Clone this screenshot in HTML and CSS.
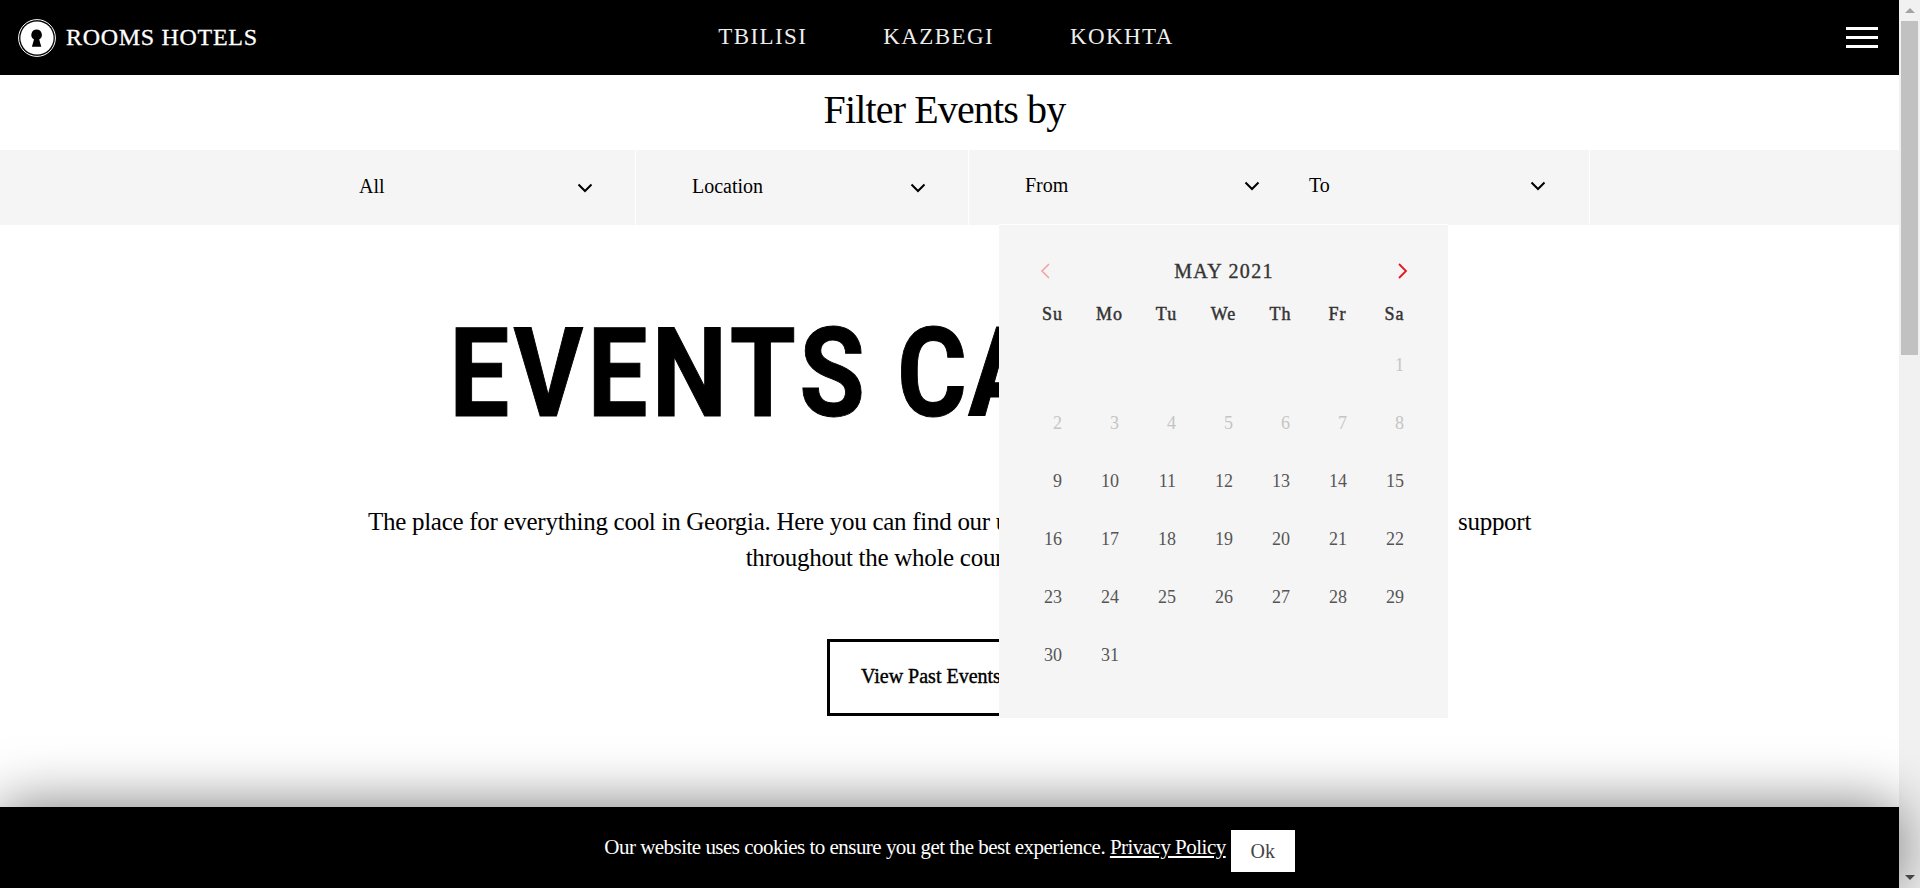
FILE: index.html
```html
<!DOCTYPE html>
<html lang="en">
<head>
    <meta charset="UTF-8">
    <meta name="viewport" content="width=device-width, initial-scale=1.0">
    <title>Events Calendar - Rooms Hotels</title>
    <link rel="stylesheet" href="styles.css">
</head>
<body>
    <div class="page">
        <header class="site-header">
            <a class="logo" href="#">
                <svg class="logo-mark" viewBox="0 0 38 38" width="38" height="38">
                    <circle cx="19" cy="19" r="18.4" fill="none" stroke="#fff" stroke-width="1"/>
                    <circle cx="19" cy="19" r="16.6" fill="#fff"/>
                    <path d="M18.6 10.5a5.3 5.3 0 0 1 2.6 9.9l2.1 7.4h-9.4l2.1-7.4a5.3 5.3 0 0 1 2.6-9.9z" fill="#000"/>
                </svg>
                <span class="logo-text">ROOMS HOTELS</span>
            </a>
            <nav class="main-nav">
                <a href="#">TBILISI</a>
                <a href="#">KAZBEGI</a>
                <a href="#">KOKHTA</a>
            </nav>
            <button class="menu-btn" aria-label="Menu"><span></span><span></span><span></span></button>
        </header>

        <h2 class="filter-title">Filter Events by</h2>

        <div class="filter-bar">
            <div class="filter-cell cell-all">
                <span>All</span>
                <svg class="chevron" viewBox="0 0 16 10" width="16" height="10"><path d="M1.5 1.5 8 8l6.5-6.5" fill="none" stroke="#000" stroke-width="2"/></svg>
            </div>
            <div class="filter-cell cell-location">
                <span>Location</span>
                <svg class="chevron" viewBox="0 0 16 10" width="16" height="10"><path d="M1.5 1.5 8 8l6.5-6.5" fill="none" stroke="#000" stroke-width="2"/></svg>
            </div>
            <div class="filter-cell cell-from">
                <span>From</span>
                <svg class="chevron" viewBox="0 0 16 10" width="16" height="10"><path d="M1.5 1.5 8 8l6.5-6.5" fill="none" stroke="#000" stroke-width="2"/></svg>

                <div class="calendar">
                    <div class="cal-head">
                        <svg class="cal-arrow" viewBox="0 0 10 16" width="10" height="16"><path d="M9 1 2 8l7 7" fill="none" stroke="#f7a3a3" stroke-width="1.6"/></svg>
                        <span class="cal-month">MAY 2021</span>
                        <svg class="cal-arrow" viewBox="0 0 10 16" width="10" height="16"><path d="m1 1 7 7-7 7" fill="none" stroke="#e9141c" stroke-width="1.8"/></svg>
                    </div>
                    <div class="cal-weekdays">
                        <span>Su</span><span>Mo</span><span>Tu</span><span>We</span><span>Th</span><span>Fr</span><span>Sa</span>
                    </div>
                    <div class="cal-days">
                        <span></span><span></span><span></span><span></span><span></span><span></span><span class="off">1</span>
                        <span class="off">2</span><span class="off">3</span><span class="off">4</span><span class="off">5</span><span class="off">6</span><span class="off">7</span><span class="off">8</span>
                        <span>9</span><span>10</span><span>11</span><span>12</span><span>13</span><span>14</span><span>15</span>
                        <span>16</span><span>17</span><span>18</span><span>19</span><span>20</span><span>21</span><span>22</span>
                        <span>23</span><span>24</span><span>25</span><span>26</span><span>27</span><span>28</span><span>29</span>
                        <span>30</span><span>31</span>
                    </div>
                </div>
            </div>
            <div class="filter-cell cell-to">
                <span>To</span>
                <svg class="chevron" viewBox="0 0 16 10" width="16" height="10"><path d="M1.5 1.5 8 8l6.5-6.5" fill="none" stroke="#000" stroke-width="2"/></svg>
            </div>
            <div class="filter-cell cell-empty"></div>
        </div>

        <main class="hero">
            <h1 class="hero-title"><span class="word-first">EVENTS</span> CALENDAR</h1>
            <p class="hero-text">The place for everything cool in Georgia. Here you can find our upcoming events, festivals and artists we truly&ensp;support<br>throughout the whole country and beyond</p>
            <a class="past-btn" href="#">View Past Events</a>
        </main>

        <div class="cookie-bar">
            <span>Our website uses cookies to ensure you get the best experience. <a href="#">Privacy Policy</a></span>
            <button class="cookie-ok">Ok</button>
        </div>
    </div>

    <aside class="scrollbar">
        <span class="scroll-up"></span>
        <span class="scroll-thumb"></span>
        <span class="scroll-down"></span>
    </aside>
</body>
</html>
```
FILE: styles.css
```css
* {
    box-sizing: border-box;
    margin: 0;
    padding: 0;
}
html, body {
    height: 100%;
    overflow: hidden;
}
body {
    display: flex;
    font-family: "Liberation Serif", serif;
    color: #000;
    background: #fff;
}
a {
    color: inherit;
    text-decoration: none;
}
.page {
    width: 1899px;
    height: 888px;
    display: flex;
    flex-direction: column;
}

/* header */
.site-header {
    height: 75px;
    flex: none;
    background: #000;
    display: grid;
    grid-template-columns: 1fr auto 1fr;
    align-items: center;
    padding: 0 21px 0 18px;
}
.logo {
    display: flex;
    align-items: center;
    gap: 10px;
    color: #fff;
}
.logo-text {
    font-size: 24px;
    letter-spacing: 0.7px;
    font-weight: 400;
    -webkit-text-stroke: 0.3px #fff;
}
.main-nav {
    display: flex;
    gap: 76px;
    margin-right: 4px;
    margin-bottom: 2px;
}
.main-nav a {
    color: #eee;
    font-size: 23px;
    letter-spacing: 1.4px;
}
.menu-btn {
    width: 32px;
    justify-self: end;
    background: none;
    border: none;
    display: flex;
    flex-direction: column;
    gap: 6px;
}
.menu-btn span {
    display: block;
    height: 3px;
    background: #fff;
}

/* filters */
.filter-title {
    height: 75px;
    flex: none;
    text-align: center;
    font-size: 40px;
    font-weight: 400;
    line-height: 70px;
    letter-spacing: -0.86px;
    padding-right: 10px;
}
.filter-bar {
    height: 75px;
    flex: none;
    display: flex;
    background: #f5f5f5;
    font-size: 20px;
}
.filter-cell {
    display: flex;
    align-items: center;
    justify-content: space-between;
    position: relative;
}
.filter-cell .chevron {
    flex: none;
}
.cell-all {
    width: 636px;
    padding: 0 42px 0 359px;
    border-right: 1px solid #fff;
}
.cell-all > span,
.cell-location > span {
    margin-bottom: 2px;
}
.cell-location {
    width: 333px;
    padding: 0 42px 0 56px;
    border-right: 1px solid #fff;
}
.cell-from {
    width: 310px;
    padding: 0 19px 4px 56px;
}
.cell-to {
    width: 311px;
    padding: 0 43px 4px 30px;
    border-right: 1px solid #fff;
}
.cell-empty {
    flex: 1;
}

/* date picker dropdown */
.calendar {
    position: absolute;
    top: 74px;
    left: 30px;
    width: 449px;
    height: 494px;
    padding: 31px 24px 0 25px;
    background: #f5f5f5;
    border-top: 1px solid #fff;
    z-index: 5;
}
.cal-head {
    display: flex;
    align-items: center;
    justify-content: space-between;
    padding: 0 16px 0 16px;
    height: 30px;
}
.cal-month {
    font-size: 20px;
    letter-spacing: 1.3px;
    color: #333;
    -webkit-text-stroke: 0.35px #333;
}
.cal-weekdays,
.cal-days {
    display: grid;
    grid-template-columns: repeat(7, 57px);
}
.cal-weekdays {
    margin-top: 14px;
    height: 28px;
    line-height: 28px;
    font-size: 18px;
    letter-spacing: 1px;
    text-align: center;
    color: #333;
    -webkit-text-stroke: 0.45px #333;
}
.cal-days {
    margin-top: 8px;
    grid-auto-rows: 58px;
    font-size: 18px;
    line-height: 58px;
    color: #555;
    text-align: right;
}
.cal-days span {
    padding-right: 19px;
}
.cal-days .off {
    color: #c4c4c4;
}

/* hero */
.hero {
    flex: 1;
    min-height: 0;
    text-align: center;
    padding-top: 91px;
}
.hero-title {
    font-family: "Roboto", sans-serif;
    font-size: 124px;
    font-weight: 700;
    line-height: 116px;
    letter-spacing: 1.5px;
    -webkit-text-stroke: 1px #000;
    transform: scaleX(0.86);
}
.word-first {
    letter-spacing: 5px;
}
.hero-text {
    margin-top: 72px;
    font-size: 25px;
    line-height: 35.5px;
    letter-spacing: -0.28px;
}
.past-btn {
    display: block;
    margin: 64px 0 0 827px;
    width: 245px;
    height: 77px;
    padding: 23px 0 0 31px;
    border: 3px solid #000;
    text-align: left;
    font-size: 20px;
    -webkit-text-stroke: 0.4px #000;
}

/* cookies */
.cookie-bar {
    height: 81px;
    flex: none;
    position: relative;
    background: #000;
    color: #fff;
    box-shadow: 0 0 60px rgba(0, 0, 0, 0.55);
    display: flex;
    align-items: center;
    justify-content: center;
    gap: 5px;
    font-size: 21px;
    letter-spacing: -0.52px;
}
.cookie-bar > span {
    margin-bottom: 1px;
}
.cookie-bar a {
    text-decoration: underline;
}
.cookie-ok {
    width: 64px;
    height: 42px;
    margin-top: 7px;
    border: none;
    background: #fff;
    color: #444;
    font-family: inherit;
    font-size: 20px;
}

/* page scrollbar */
.scrollbar {
    width: 21px;
    height: 888px;
    flex: none;
    background: #f1f1f1;
    display: flex;
    flex-direction: column;
    align-items: center;
}
.scroll-up,
.scroll-down {
    width: 0;
    height: 0;
    border-left: 5px solid transparent;
    border-right: 5px solid transparent;
}
.scroll-up {
    margin-top: 8px;
    border-bottom: 5px solid #a3a3a3;
}
.scroll-thumb {
    width: 17px;
    height: 334px;
    margin-top: 8px;
    background: #c1c1c1;
}
.scroll-down {
    margin-top: auto;
    margin-bottom: 8px;
    border-top: 5px solid #505050;
}
```
